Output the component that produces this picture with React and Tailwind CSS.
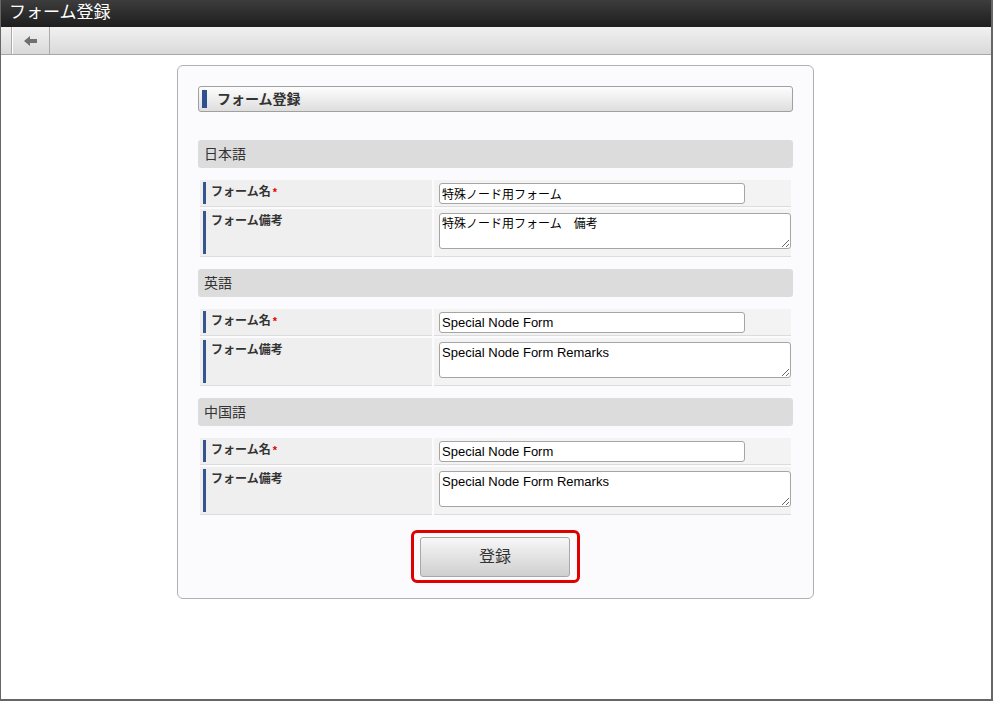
// Form registration screen

const SECTIONS = [
  {
    title: "日本語",
    name: "特殊ノード用フォーム",
    note: "特殊ノード用フォーム　備考",
    jp: true,
  },
  {
    title: "英語",
    name: "Special Node Form",
    note: "Special Node Form Remarks",
  },
  {
    title: "中国語",
    name: "Special Node Form",
    note: "Special Node Form Remarks",
  },
];

const FONT = "font-['Liberation_Sans','Noto_Sans_CJK_JP',sans-serif]";

function LabelCell({ children, required }) {
  return (
    <div className="bg-[#efefef] border-b border-[#dcdcdc] pl-[3px] py-[2px] flex">
      <div className="flex-1 border-l-[3px] border-[#34558f] pl-[5px] pt-[2px] text-[12px] leading-[16px] font-bold text-[#333]">
        {children}
        {required && (
          <span className="text-[#e00000] text-[11px] align-top ml-[2px]">*</span>
        )}
      </div>
    </div>
  );
}

function Section({ section, first }) {
  const size = section.jp ? "text-[12px]" : "text-[13px]";
  return (
    <div className={first ? "mt-[28px]" : "mt-[10px]"}>
      <div className="h-[28px] bg-[#dcdcdc] rounded-[3px] pl-[6px] flex items-center text-[14px] text-[#333]">
        {section.title}
      </div>

      <div className="mt-[10px] grid grid-cols-[232px_1fr] gap-[2px] p-[2px]">
        <LabelCell required>フォーム名</LabelCell>
        <div className="bg-[#f3f3f3] border-b border-[#dcdcdc] pl-[5px] pt-[3px] pb-[2px]">
          <input
            readOnly
            value={section.name}
            className={`block w-[306px] h-[21px] px-[2px] border border-[#a5a5a5] rounded-[3px] bg-white text-black outline-none ${size} ${FONT}`}
          />
        </div>

        <LabelCell>フォーム備考</LabelCell>
        <div className="bg-[#f3f3f3] border-b border-[#dcdcdc] pl-[5px] pt-[4px] pb-[7px]">
          <textarea
            readOnly
            value={section.note}
            className={`block w-[352px] h-[36px] px-[2px] pt-[2px] border border-[#a5a5a5] rounded-[3px] bg-white text-black outline-none leading-[16px] ${size} ${FONT}`}
          />
        </div>
      </div>
    </div>
  );
}

export default function App() {
  return (
    <div className={`w-[993px] h-[701px] flex flex-col bg-white border-l border-r-2 border-b-2 border-[#666] ${FONT}`}>

      {/* Title bar */}
      <div className="h-[27px] shrink-0 bg-linear-to-b from-[#3d3d3d] to-[#1e1e1e] text-white text-[17px] leading-[26px] pl-[8px]">
        フォーム登録
      </div>

      {/* Toolbar */}
      <div className="h-[28px] shrink-0 flex bg-linear-to-b from-[#f1f1f1] to-[#d9d9d9] border-b border-[#a8a8a8]">
        <div className="w-[11px] border-r border-[#ababab]" />
        <div className="w-[38px] flex items-center justify-center border-l border-white border-r border-r-[#ababab]">
          <svg width="14" height="10" viewBox="0 0 14 10">
            <polygon points="0,5 6,0 6,3 13,3 13,7 6,7 6,10" fill="#6f6f6f" />
          </svg>
        </div>
      </div>

      {/* Content */}
      <div className="flex-1 pt-[10px]">
        <div className="w-[637px] ml-[176px] border border-[#b0b0b0] rounded-[6px] bg-[#fbfbfe] px-[20px] pt-[20px] pb-[15px]">

          {/* Heading */}
          <div className="h-[26px] flex items-center border border-[#a0a0a0] rounded-[3px] bg-linear-to-b from-[#fdfdfd] to-[#dedede] pl-[3px]">
            <div className="w-[5px] h-[18px] bg-[#2f4f8f]" />
            <span className="ml-[10px] text-[14px] font-bold text-[#333]">フォーム登録</span>
          </div>

          {SECTIONS.map((s, i) => (
            <Section key={s.title} section={s} first={i === 0} />
          ))}

          {/* Submit */}
          <div className="mt-[13px] flex justify-center">
            <div className="border-[3px] border-[#e00000] rounded-[6px] pl-[6px] pr-[7px] pt-[4px] pb-[3px]">
              <button className="w-[150px] h-[40px] border border-[#a8a8a8] rounded-[3px] bg-linear-to-b from-[#f7f7f7] to-[#cfcfcf] text-[16px] text-[#333]">
                登録
              </button>
            </div>
          </div>
        </div>
      </div>
    </div>
  );
}
